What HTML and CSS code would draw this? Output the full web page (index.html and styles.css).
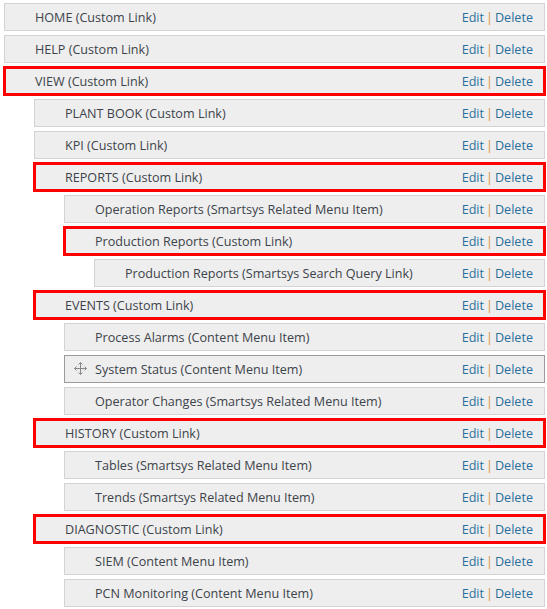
FILE: index.html
```html
<!DOCTYPE html>
<html>
<head>
<meta charset="utf-8">
<link rel="stylesheet" href="styles.css">
</head>
<body>
<ul class="menu">
  <li class="item"><div class="bar"><span class="title">HOME (Custom Link)</span><span class="actions"><a>Edit</a><span class="sep">|</span><a>Delete</a></span></div></li>
  <li class="item"><div class="bar"><span class="title">HELP (Custom Link)</span><span class="actions"><a>Edit</a><span class="sep">|</span><a>Delete</a></span></div></li>
  <li class="item"><div class="bar marked"><span class="title">VIEW (Custom Link)</span><span class="actions"><a>Edit</a><span class="sep">|</span><a>Delete</a></span></div>
    <ul class="menu sub">
      <li class="item"><div class="bar"><span class="title">PLANT BOOK (Custom Link)</span><span class="actions"><a>Edit</a><span class="sep">|</span><a>Delete</a></span></div></li>
      <li class="item"><div class="bar"><span class="title">KPI (Custom Link)</span><span class="actions"><a>Edit</a><span class="sep">|</span><a>Delete</a></span></div></li>
      <li class="item"><div class="bar marked"><span class="title">REPORTS (Custom Link)</span><span class="actions"><a>Edit</a><span class="sep">|</span><a>Delete</a></span></div>
        <ul class="menu sub">
          <li class="item"><div class="bar"><span class="title">Operation Reports (Smartsys Related Menu Item)</span><span class="actions"><a>Edit</a><span class="sep">|</span><a>Delete</a></span></div></li>
          <li class="item"><div class="bar marked"><span class="title">Production Reports (Custom Link)</span><span class="actions"><a>Edit</a><span class="sep">|</span><a>Delete</a></span></div>
            <ul class="menu sub">
              <li class="item"><div class="bar"><span class="title">Production Reports (Smartsys Search Query Link)</span><span class="actions"><a>Edit</a><span class="sep">|</span><a>Delete</a></span></div></li>
            </ul>
          </li>
        </ul>
      </li>
      <li class="item"><div class="bar marked"><span class="title">EVENTS (Custom Link)</span><span class="actions"><a>Edit</a><span class="sep">|</span><a>Delete</a></span></div>
        <ul class="menu sub">
          <li class="item"><div class="bar"><span class="title">Process Alarms (Content Menu Item)</span><span class="actions"><a>Edit</a><span class="sep">|</span><a>Delete</a></span></div></li>
          <li class="item"><div class="bar hover"><svg class="move" width="13" height="13" viewBox="0 0 13 13"><g fill="none" stroke="#888" stroke-width="1"><path d="M6.5 0.5V12.5M0.5 6.5H12.5"/><path d="M4.5 2.5L6.5 0.5L8.5 2.5M4.5 10.5L6.5 12.5L8.5 10.5M2.5 4.5L0.5 6.5L2.5 8.5M10.5 4.5L12.5 6.5L10.5 8.5"/></g></svg><span class="title">System Status (Content Menu Item)</span><span class="actions"><a>Edit</a><span class="sep">|</span><a>Delete</a></span></div></li>
          <li class="item"><div class="bar"><span class="title">Operator Changes (Smartsys Related Menu Item)</span><span class="actions"><a>Edit</a><span class="sep">|</span><a>Delete</a></span></div></li>
        </ul>
      </li>
      <li class="item"><div class="bar marked"><span class="title">HISTORY (Custom Link)</span><span class="actions"><a>Edit</a><span class="sep">|</span><a>Delete</a></span></div>
        <ul class="menu sub">
          <li class="item"><div class="bar"><span class="title">Tables (Smartsys Related Menu Item)</span><span class="actions"><a>Edit</a><span class="sep">|</span><a>Delete</a></span></div></li>
          <li class="item"><div class="bar"><span class="title">Trends (Smartsys Related Menu Item)</span><span class="actions"><a>Edit</a><span class="sep">|</span><a>Delete</a></span></div></li>
        </ul>
      </li>
      <li class="item"><div class="bar marked"><span class="title">DIAGNOSTIC (Custom Link)</span><span class="actions"><a>Edit</a><span class="sep">|</span><a>Delete</a></span></div>
        <ul class="menu sub">
          <li class="item"><div class="bar"><span class="title">SIEM (Content Menu Item)</span><span class="actions"><a>Edit</a><span class="sep">|</span><a>Delete</a></span></div></li>
          <li class="item"><div class="bar"><span class="title">PCN Monitoring (Content Menu Item)</span><span class="actions"><a>Edit</a><span class="sep">|</span><a>Delete</a></span></div></li>
        </ul>
      </li>
    </ul>
  </li>
</ul>
</body>
</html>
```
FILE: styles.css
```css
html, body {
  margin: 0;
  background: #fff;
}
body {
  padding: 3px 2px 0 4px;
  font-family: "Open Sans", "Noto Sans", sans-serif;
  font-size: 12.6px;
  color: #3c434a;
}
.menu {
  list-style: none;
  margin: 0;
  padding: 0;
  display: flex;
  flex-direction: column;
  gap: 4px;
}
.menu.sub {
  padding-left: 30px;
  margin-top: 4px;
}
.bar {
  position: relative;
  display: flex;
  align-items: center;
  height: 26px;
  padding: 0 11px 0 30px;
  background: #eeeeee;
  border: 1px solid #d3d3d3;
}
.bar.marked {
  outline: 3px solid #ff0000;
  outline-offset: -2px;
}
.bar.hover {
  border-color: #9a9a9a;
}
.move {
  position: absolute;
  left: 9px;
  top: 6px;
}
.title {
  flex: 1;
  white-space: nowrap;
}
.actions {
  white-space: nowrap;
}
.actions a {
  color: #2a6e9c;
}
.sep {
  color: #d9922e;
  margin: 0 2px;
}
```
